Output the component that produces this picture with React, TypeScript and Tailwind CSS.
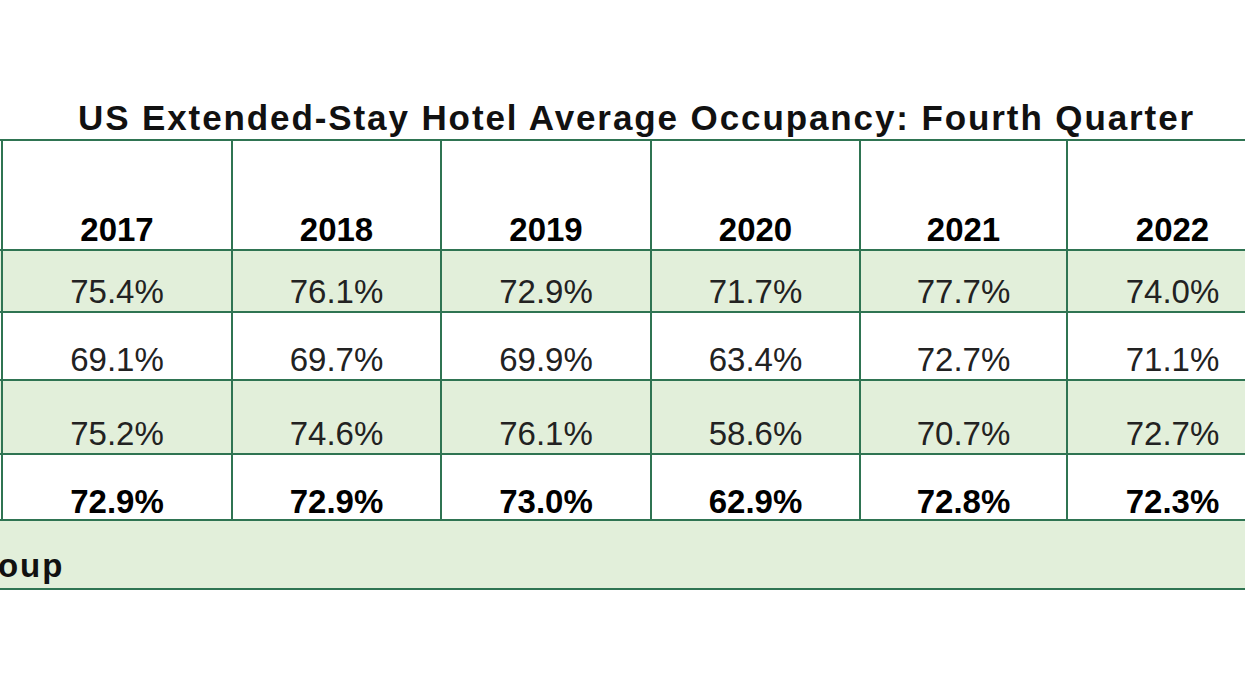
import React from "react";

const years = ["2017", "2018", "2019", "2020", "2021", "2022"];

const rows = [
  { values: ["75.4%", "76.1%", "72.9%", "71.7%", "77.7%", "74.0%"], fill: "bg-[#e2efda]", h: "h-[60px]", bold: false },
  { values: ["69.1%", "69.7%", "69.9%", "63.4%", "72.7%", "71.1%"], fill: "bg-white", h: "h-[66px]", bold: false },
  { values: ["75.2%", "74.6%", "76.1%", "58.6%", "70.7%", "72.7%"], fill: "bg-[#e2efda]", h: "h-[72px]", bold: false },
  { values: ["72.9%", "72.9%", "73.0%", "62.9%", "72.8%", "72.3%"], fill: "bg-white", h: "h-[64px]", bold: true },
];

const App = () => {
  return (
    <div className="w-[1245px] h-[700px] bg-white overflow-hidden font-['Liberation_Sans',Arial,sans-serif]">
      <h1 className="mt-[100px] h-[35px] pl-[28px] text-center text-[35px] leading-none font-bold tracking-[1.9px] text-[#111] whitespace-nowrap">
        US Extended-Stay Hotel Average Occupancy: Fourth Quarter
      </h1>

      {/* table is cropped: the label column sits off the left edge */}
      <div className="mt-[4px] -ml-[300px] w-[1582px] p-[2px] pr-0 bg-[#2f7452] grid grid-cols-[299px_228px_207px_208px_207px_205px_209px] gap-[2px]">
        <div className="h-[108px] bg-white" />
        {years.map((y) => (
          <div
            key={y}
            className="h-[108px] bg-white flex items-end justify-center pb-[3px] text-[33px] leading-none font-bold text-black"
          >
            {y}
          </div>
        ))}

        {rows.map((row, i) => (
          <React.Fragment key={i}>
            <div className={`${row.h} ${row.fill}`} />
            {row.values.map((v, j) => (
              <div
                key={j}
                className={`${row.h} ${row.fill} flex items-end justify-center text-[33px] leading-none ${
                  row.bold ? "font-bold text-black pb-[1px]" : "text-[#222] pb-[3px]"
                }`}
              >
                {v}
              </div>
            ))}
          </React.Fragment>
        ))}

        <div className="col-span-7 h-[67px] bg-[#e2efda] flex items-end pb-[6px] text-[33px] leading-none font-bold tracking-[2px] text-[#111] whitespace-nowrap">
          <span className="-ml-[26px]">Source: CoStar Group</span>
        </div>
      </div>
    </div>
  );
};

export default App;
